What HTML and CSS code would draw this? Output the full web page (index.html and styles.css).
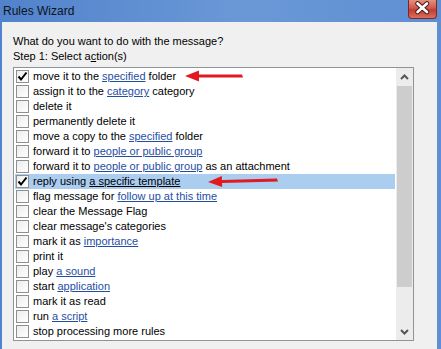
FILE: index.html
```html
<!DOCTYPE html>
<html lang="en">
  <head>
    <meta charset="UTF-8" />
    <title>Rules Wizard</title>
    <link rel="stylesheet" href="styles.css">
  </head>
  <body>
    <div class="window">
      <div class="titlebar">
        <span class="title">Rules Wizard</span>
        <div class="close">
          <svg width="29" height="19" viewBox="0 0 29 19">
            <path d="M9.5 4.5 L19 13 M19 4.5 L9.5 13" stroke="#4a1a1a" stroke-width="4.6" stroke-linecap="round" />
            <path d="M9.5 4.5 L19 13 M19 4.5 L9.5 13" stroke="#fff" stroke-width="2.6" stroke-linecap="round" />
          </svg>
        </div>
      </div>
      <div class="client">
        <p class="prompt">What do you want to do with the message?</p>
        <p class="prompt">Step 1: Select a<u>c</u>tion(s)</p>
        <div class="listbox">
          <ul class="actions">
            <li class="row"><span class="check"><svg width="11" height="11" viewBox="0 0 11 11"><path d="M1.5 5.5 L4 8.5 L9.5 1.5" fill="none" stroke="#000" stroke-width="2" /></svg></span>move it to the <a href="#">specified</a> folder</li>
            <li class="row"><span class="check"></span>assign it to the <a href="#">category</a> category</li>
            <li class="row"><span class="check"></span>delete it</li>
            <li class="row"><span class="check"></span>permanently delete it</li>
            <li class="row"><span class="check"></span>move a copy to the <a href="#">specified</a> folder</li>
            <li class="row"><span class="check"></span>forward it to <a href="#">people or public group</a></li>
            <li class="row"><span class="check"></span>forward it to <a href="#">people or public group</a> as an attachment</li>
            <li class="row selected"><span class="check"><svg width="11" height="11" viewBox="0 0 11 11"><path d="M1.5 5.5 L4 8.5 L9.5 1.5" fill="none" stroke="#000" stroke-width="2" /></svg></span>reply using <a href="#">a specific template</a></li>
            <li class="row"><span class="check"></span>flag message for <a href="#">follow up at this time</a></li>
            <li class="row"><span class="check"></span>clear the Message Flag</li>
            <li class="row"><span class="check"></span>clear message's categories</li>
            <li class="row"><span class="check"></span>mark it as <a href="#">importance</a></li>
            <li class="row"><span class="check"></span>print it</li>
            <li class="row"><span class="check"></span>play <a href="#">a sound</a></li>
            <li class="row"><span class="check"></span>start <a href="#">application</a></li>
            <li class="row"><span class="check"></span>mark it as read</li>
            <li class="row"><span class="check"></span>run <a href="#">a script</a></li>
            <li class="row"><span class="check"></span>stop processing more rules</li>
          </ul>
          <div class="scrollbar">
            <div class="sb-btn up">
              <svg width="9" height="6" viewBox="0 0 9 6"><path d="M1 5 L4.5 1.5 L8 5" fill="none" stroke="#555" stroke-width="2" /></svg>
            </div>
            <div class="thumb"></div>
            <div class="track"></div>
            <div class="sb-btn down">
              <svg width="9" height="6" viewBox="0 0 9 6"><path d="M1 1 L4.5 4.5 L8 1" fill="none" stroke="#555" stroke-width="2" /></svg>
            </div>
          </div>
        </div>
      </div>
      <!-- red callout arrows drawn over the list -->
      <svg class="arrows" width="441" height="349" viewBox="0 0 441 349">
        <g fill="#e2191f">
          <polygon points="185,76 199,70.5 199,74.5 242,74.5 243,77.5 199,77.5 199,81.5" />
          <polygon transform="rotate(-1.7 208 182)" points="208,182 222,176.5 222,180.5 277,180.5 278,183.5 222,183.5 222,187.5" />
        </g>
      </svg>
    </div>
  </body>
</html>
```

FILE: styles.css
```css
body {
  margin: 0;
  font-family: 'Liberation Sans', Arial, sans-serif;
  font-size: 11px;
  color: #000;
}

.window {
  position: relative;
  width: 441px;
  height: 349px;
  display: flex;
  flex-direction: column;
  background: linear-gradient(90deg, #5282cb, #6a98d7 55%, #5f8fd3);
}

.titlebar {
  height: 22px;
  display: flex;
  align-items: flex-start;
  justify-content: space-between;
}

.title {
  font-size: 12px;
  line-height: 22px;
  padding-left: 3px;
  color: #0c1420;
}

.close {
  width: 29px;
  height: 19px;
  margin-right: 4px;
  box-sizing: border-box;
  border: 1px solid #7a2a26;
  border-top: none;
  border-radius: 0 0 4px 4px;
  background: linear-gradient(#e3917f, #d1564a 45%, #c23c30 55%, #d9705e);
}

.close svg {
  display: block;
  margin: -1px 0 0 -1px;
}

.client {
  flex: 1;
  margin: 0 4px 0 2px;
  padding: 12px 0 0 11px;
  background: #f0f0f0;
}

.prompt {
  margin: 0;
  line-height: 15px;
}

.listbox {
  width: 401px;
  height: 274px;
  margin-top: 3px;
  box-sizing: border-box;
  border: 1px solid #8e9399;
  background: #fff;
  display: flex;
}

.actions {
  flex: 1;
  list-style: none;
  margin: 0;
  padding: 1px;
}

.row {
  height: 15px;
  line-height: 15px;
  display: flex;
  align-items: center;
  white-space: pre;
}

.row.selected {
  background: #aacdf0;
}

.row a {
  color: #1f4ea3;
  text-decoration: underline;
}

.row.selected a {
  color: #000;
}

.check {
  width: 13px;
  height: 13px;
  box-sizing: border-box;
  margin: 0 4px 0 1px;
  border: 1px solid #8f8f8f;
  background: linear-gradient(135deg, #ececec, #fff);
}

.check svg {
  display: block;
}

.scrollbar {
  width: 17px;
  display: flex;
  flex-direction: column;
  background: #ececec;
}

.sb-btn {
  display: flex;
  align-items: center;
  justify-content: center;
}

.sb-btn.up {
  height: 18px;
}

.sb-btn.down {
  height: 17px;
}

.thumb {
  height: 201px;
  margin: 0 1px;
  background: #cdcdcd;
}

.track {
  flex: 1;
}

.arrows {
  position: absolute;
  left: 0;
  top: 0;
  pointer-events: none;
}
```
